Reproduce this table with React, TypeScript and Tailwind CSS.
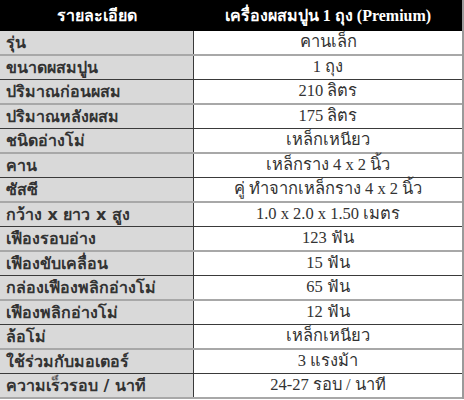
const rows: [string, string][] = [
  ["รุ่น", "คานเล็ก"],
  ["ขนาดผสมปูน", "1 ถุง"],
  ["ปริมาณก่อนผสม", "210 ลิตร"],
  ["ปริมาณหลังผสม", "175 ลิตร"],
  ["ชนิดอ่างโม่", "เหล็กเหนียว"],
  ["คาน", "เหล็กราง 4 x 2 นิ้ว"],
  ["ซัสซี", "คู่ ทำจากเหล็กราง 4 x 2 นิ้ว"],
  ["กว้าง x ยาว x สูง", "1.0 x 2.0 x 1.50 เมตร"],
  ["เฟืองรอบอ่าง", "123 ฟัน"],
  ["เฟืองขับเคลื่อน", "15 ฟัน"],
  ["กล่องเฟืองพลิกอ่างโม่", "65 ฟัน"],
  ["เฟืองพลิกอ่างโม่", "12 ฟัน"],
  ["ล้อโม่", "เหล็กเหนียว"],
  ["ใช้ร่วมกับมอเตอร์", "3 แรงม้า"],
  ["ความเร็วรอบ / นาที", "24-27 รอบ / นาที"],
];

export default function App() {
  return (
    <div className="w-[464px] h-[400px] overflow-hidden bg-white">
      <div className="w-[464px] border-r-2 border-[#9a9a9a]">
        {/* Header */}
        <div className="flex h-[31px] bg-black text-white font-bold text-[16px] font-['Tahoma','DejaVu_Sans',sans-serif]">
          <div className="w-[194px] flex items-center justify-center">รายละเอียด</div>
          <div className="flex-1 flex items-center justify-center">
            เครื่องผสมปูน <span className="mx-1 font-['Liberation_Serif',serif]">1</span> ถุง{" "}
            <span className="ml-1 font-['Liberation_Serif',serif]">(Premium)</span>
          </div>
        </div>

        {/* Rows */}
        {rows.map(([label, value], i) => (
          <div
            key={label}
            className={
              i % 2 === 0
                ? "flex h-[25px] border-b-2 border-[#a8a8a8]"
                : "flex h-[24px] border-b border-[#3a3a3a]"
            }
          >
            <div className="w-[194px] shrink-0 bg-[#d9d9d9] border-r border-[#3a3a3a] flex items-center pl-[6px] text-[16px] font-bold text-[#333] font-['Tahoma','DejaVu_Sans',sans-serif]">
              {label}
            </div>
            <div className="flex-1 flex items-center justify-center text-[16.5px] text-[#333] font-['Liberation_Serif',serif]">
              {value}
            </div>
          </div>
        ))}
      </div>
    </div>
  );
}
